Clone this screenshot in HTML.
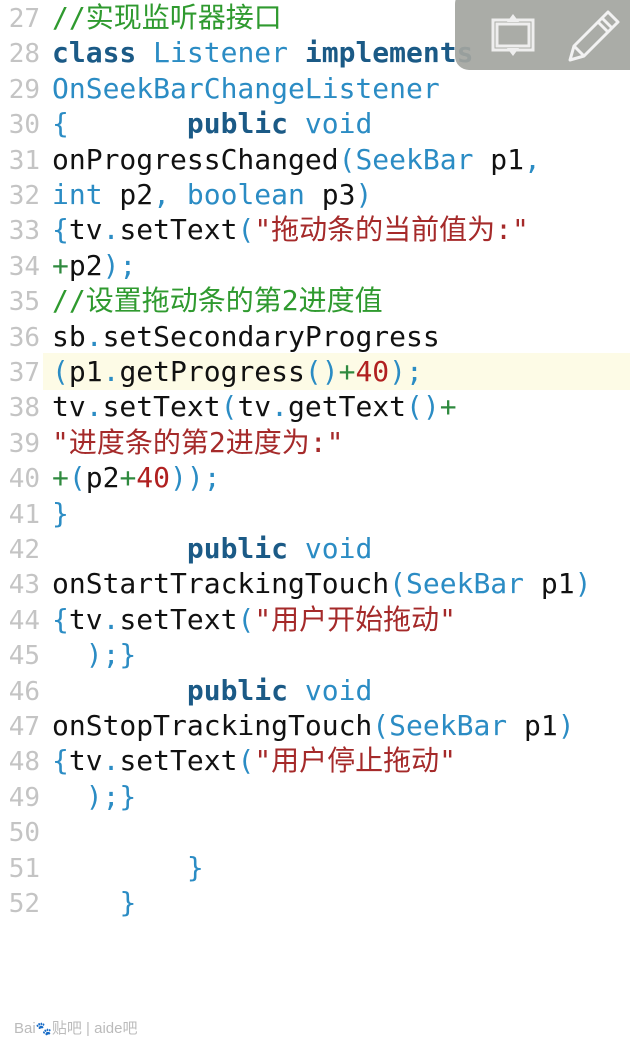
<!DOCTYPE html>
<html><head><meta charset="utf-8"><style>
html,body{margin:0;padding:0;background:#fff;width:630px;height:1050px;overflow:hidden;position:relative}
.l{position:absolute;left:0;height:36px;line-height:36px;white-space:pre;font-family:"DejaVu Sans Mono","Liberation Mono","Noto Sans CJK SC",monospace;font-size:28px;color:#111;width:630px}
.n{display:inline-block;width:40px;text-align:right;color:#c4c4c4;font-size:26px;margin-right:12px}
.c{color:#2f9a2f}.k{color:#1b5a86;font-weight:bold}.t{color:#2b8cc4}.s{color:#a52a2a}.p{color:#2b8cc4}.o{color:#2f8a3f}.d{color:#b02020}
.hl{position:absolute;left:43px;top:353px;width:587px;height:37px;background:#fdfbe6}
.ov{position:absolute;left:455px;top:-10px;width:190px;height:80px;background:#a3a59f;border-radius:14px;opacity:.92}
.wm{position:absolute;left:14px;top:1017px;font-family:"Liberation Sans","Noto Sans CJK SC",sans-serif;font-size:15px;color:#bbb}
</style></head><body>
<div class="hl"></div>
<div class="l" style="top:0px"><span class="n">27</span><span class="c">//实现监听器接口</span></div>
<div class="l" style="top:35px"><span class="n">28</span><span class="k">class</span> <span class="t">Listener</span> <span class="k">implements</span></div>
<div class="l" style="top:71px"><span class="n">29</span><span class="t">OnSeekBarChangeListener</span></div>
<div class="l" style="top:106px"><span class="n">30</span><span class="p">{</span>       <span class="k">public</span> <span class="t">void</span></div>
<div class="l" style="top:142px"><span class="n">31</span>onProgressChanged<span class="p">(</span><span class="t">SeekBar</span> p1<span class="p">,</span></div>
<div class="l" style="top:177px"><span class="n">32</span><span class="t">int</span> p2<span class="p">,</span> <span class="t">boolean</span> p3<span class="p">)</span></div>
<div class="l" style="top:212px"><span class="n">33</span><span class="p">{</span>tv<span class="p">.</span>setText<span class="p">(</span><span class="s">"拖动条的当前值为:"</span></div>
<div class="l" style="top:248px"><span class="n">34</span><span class="o">+</span>p2<span class="p">);</span></div>
<div class="l" style="top:283px"><span class="n">35</span><span class="c">//设置拖动条的第2进度值</span></div>
<div class="l" style="top:319px"><span class="n">36</span>sb<span class="p">.</span>setSecondaryProgress</div>
<div class="l" style="top:354px"><span class="n">37</span><span class="p">(</span>p1<span class="p">.</span>getProgress<span class="p">()</span><span class="o">+</span><span class="d">40</span><span class="p">);</span></div>
<div class="l" style="top:389px"><span class="n">38</span>tv<span class="p">.</span>setText<span class="p">(</span>tv<span class="p">.</span>getText<span class="p">()</span><span class="o">+</span></div>
<div class="l" style="top:425px"><span class="n">39</span><span class="s">"进度条的第2进度为:"</span></div>
<div class="l" style="top:460px"><span class="n">40</span><span class="o">+</span><span class="p">(</span>p2<span class="o">+</span><span class="d">40</span><span class="p">));</span></div>
<div class="l" style="top:496px"><span class="n">41</span><span class="p">}</span></div>
<div class="l" style="top:531px"><span class="n">42</span>        <span class="k">public</span> <span class="t">void</span></div>
<div class="l" style="top:566px"><span class="n">43</span>onStartTrackingTouch<span class="p">(</span><span class="t">SeekBar</span> p1<span class="p">)</span></div>
<div class="l" style="top:602px"><span class="n">44</span><span class="p">{</span>tv<span class="p">.</span>setText<span class="p">(</span><span class="s">"用户开始拖动"</span></div>
<div class="l" style="top:637px"><span class="n">45</span>  <span class="p">);}</span></div>
<div class="l" style="top:673px"><span class="n">46</span>        <span class="k">public</span> <span class="t">void</span></div>
<div class="l" style="top:708px"><span class="n">47</span>onStopTrackingTouch<span class="p">(</span><span class="t">SeekBar</span> p1<span class="p">)</span></div>
<div class="l" style="top:743px"><span class="n">48</span><span class="p">{</span>tv<span class="p">.</span>setText<span class="p">(</span><span class="s">"用户停止拖动"</span></div>
<div class="l" style="top:779px"><span class="n">49</span>  <span class="p">);}</span></div>
<div class="l" style="top:814px"><span class="n">50</span></div>
<div class="l" style="top:850px"><span class="n">51</span>        <span class="p">}</span></div>
<div class="l" style="top:885px"><span class="n">52</span>    <span class="p">}</span></div>
<div class="ov"></div>
<svg style="position:absolute;left:488px;top:12px" width="50" height="45" viewBox="0 0 50 45">
<g fill="none" stroke="#eee" stroke-width="3"><rect x="5" y="8" width="40" height="30"/><rect x="9" y="12" width="32" height="22"/></g>
<polygon points="25,2 19,10 31,10" fill="#eee"/><polygon points="25,44 19,36 31,36" fill="#eee"/>
</svg>
<svg style="position:absolute;left:566px;top:8px" width="56" height="56" viewBox="0 0 56 56">
<g fill="none" stroke="#f2f2f2" stroke-width="3" stroke-linejoin="round">
<path d="M42 4 L52 14 L18 48 L4 52 L8 38 Z"/><path d="M8 38 L18 48"/><path d="M36 10 L46 20"/><path d="M32 14 L42 24"/></g>
</svg>
<div class="wm">Bai<span style="font-size:13px">🐾</span>贴吧 | aide吧</div>
</body></html>
